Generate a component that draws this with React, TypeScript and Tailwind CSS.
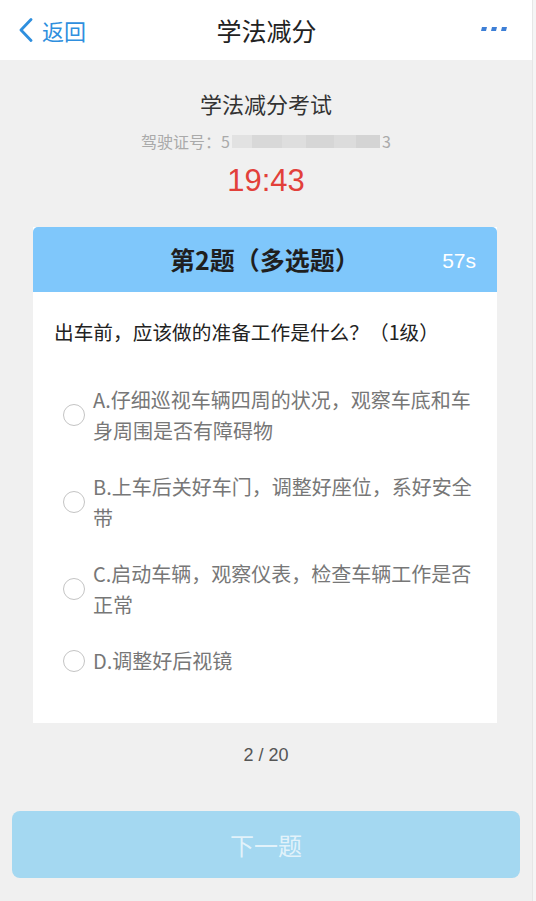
import * as React from "react";

type Option = { key: string; text: string };

const options: Option[] = [
  { key: "A", text: "A.仔细巡视车辆四周的状况，观察车底和车身周围是否有障碍物" },
  { key: "B", text: "B.上车后关好车门，调整好座位，系好安全带" },
  { key: "C", text: "C.启动车辆，观察仪表，检查车辆工作是否正常" },
  { key: "D", text: "D.调整好后视镜" },
];

const font = { fontFamily: '"Noto Sans CJK SC", "Noto Sans", sans-serif' };

const MoreDots = () => (
  <svg width="28" height="8" viewBox="0 0 28 8">
    <polygon points="2,1 7,1 6,5 1,5" fill="#3d7fd6" />
    <polygon points="12,1 17,1 16,5 11,5" fill="#3d7fd6" />
    <polygon points="22,1 27,1 26,5 21,5" fill="#3d7fd6" />
  </svg>
);

export default function App() {
  return (
    <div className="flex h-[901px] w-[536px] overflow-hidden bg-[#f0f0f0]" style={font}>
      <div className="flex w-[532px] flex-col">
        {/* nav bar */}
        <div className="flex h-[60px] items-center bg-white pl-[18px] pr-[17px]">
          <div className="flex w-[120px] items-center gap-[9px] text-[#2f8fde]">
            <svg width="15" height="24" viewBox="0 0 15 24">
              <path d="M13 1.5 L3 12 L13 22.5" fill="none" stroke="#2f8fde" strokeWidth="2.8" strokeLinecap="round" strokeLinejoin="round" />
            </svg>
            <span className="text-[22px] leading-none">返回</span>
          </div>
          <div className="flex-1 text-center text-[25px] leading-none text-[#222]">学法减分</div>
          <div className="flex w-[120px] justify-end pr-[7px]">
            <MoreDots />
          </div>
        </div>

        {/* exam info */}
        <div className="flex flex-col items-center pt-[30px]">
          <div className="text-[22px] leading-[26px] text-[#333]">学法减分考试</div>
          <div className="mt-[15px] flex items-center text-[16px] leading-[20px] text-[#aaa]">
            <span>驾驶证号：5</span>
            <span className="mx-[2px] flex h-[13px] w-[148px]">
              <span className="h-full w-[20px] bg-[#e2e2e2]" />
              <span className="h-full w-[30px] bg-[#d8d8d8]" />
              <span className="h-full w-[24px] bg-[#dedede]" />
              <span className="h-full w-[28px] bg-[#d6d6d6]" />
              <span className="h-full w-[22px] bg-[#dcdcdc]" />
              <span className="h-full w-[24px] bg-[#d4d4d4]" />
            </span>
            <span>3</span>
          </div>
          <div className="mt-[12px] text-[31px] leading-[36px] text-[#e2403a]" style={{ fontFamily: '"Liberation Sans", Arial, sans-serif' }}>
            19:43
          </div>
        </div>

        {/* question card */}
        <div className="mx-[33px] mt-[28px] w-[464px] bg-white">
          <div className="relative flex h-[65px] items-center justify-center rounded-t-[5px] bg-[#7fc7fb]">
            <span className="text-[25px] font-bold leading-none text-[#1f1f1f]">第2题（多选题）</span>
            <span
              className="absolute right-[21px] top-1/2 -translate-y-1/2 text-[21px] leading-none text-white"
              style={{ fontFamily: '"Liberation Sans", Arial, sans-serif' }}
            >
              57s
            </span>
          </div>
          <div className="px-[21px] pb-[47px] pt-[26px]">
            <div className="text-[19.7px] leading-[28px] text-[#222]">出车前，应该做的准备工作是什么？（1级）</div>
            <div className="mt-[38px] flex flex-col gap-[25px] pl-[9px]">
              {options.map((o) => (
                <div key={o.key} className="flex items-center gap-[8px]">
                  <span className="h-[22px] w-[22px] shrink-0 rounded-full border-[1.5px] border-[#c4c4c4]" />
                  <span className="w-[388px] text-[20px] leading-[31px] text-[#777]">{o.text}</span>
                </div>
              ))}
            </div>
          </div>
        </div>

        <div className="mt-[21px] text-center text-[18px] leading-[22px] text-[#555]" style={{ fontFamily: '"Liberation Sans", Arial, sans-serif' }}>
          2 / 20
        </div>

        <div className="mx-[12px] mt-[45px] flex h-[67px] items-center justify-center rounded-[8px] bg-[#a4d8f1]">
          <span className="text-[24px] leading-none text-white/70">下一题</span>
        </div>
      </div>
      <div className="w-[4px] border-l border-[#e6e6e6] bg-[#f5f5f5]" />
    </div>
  );
}
